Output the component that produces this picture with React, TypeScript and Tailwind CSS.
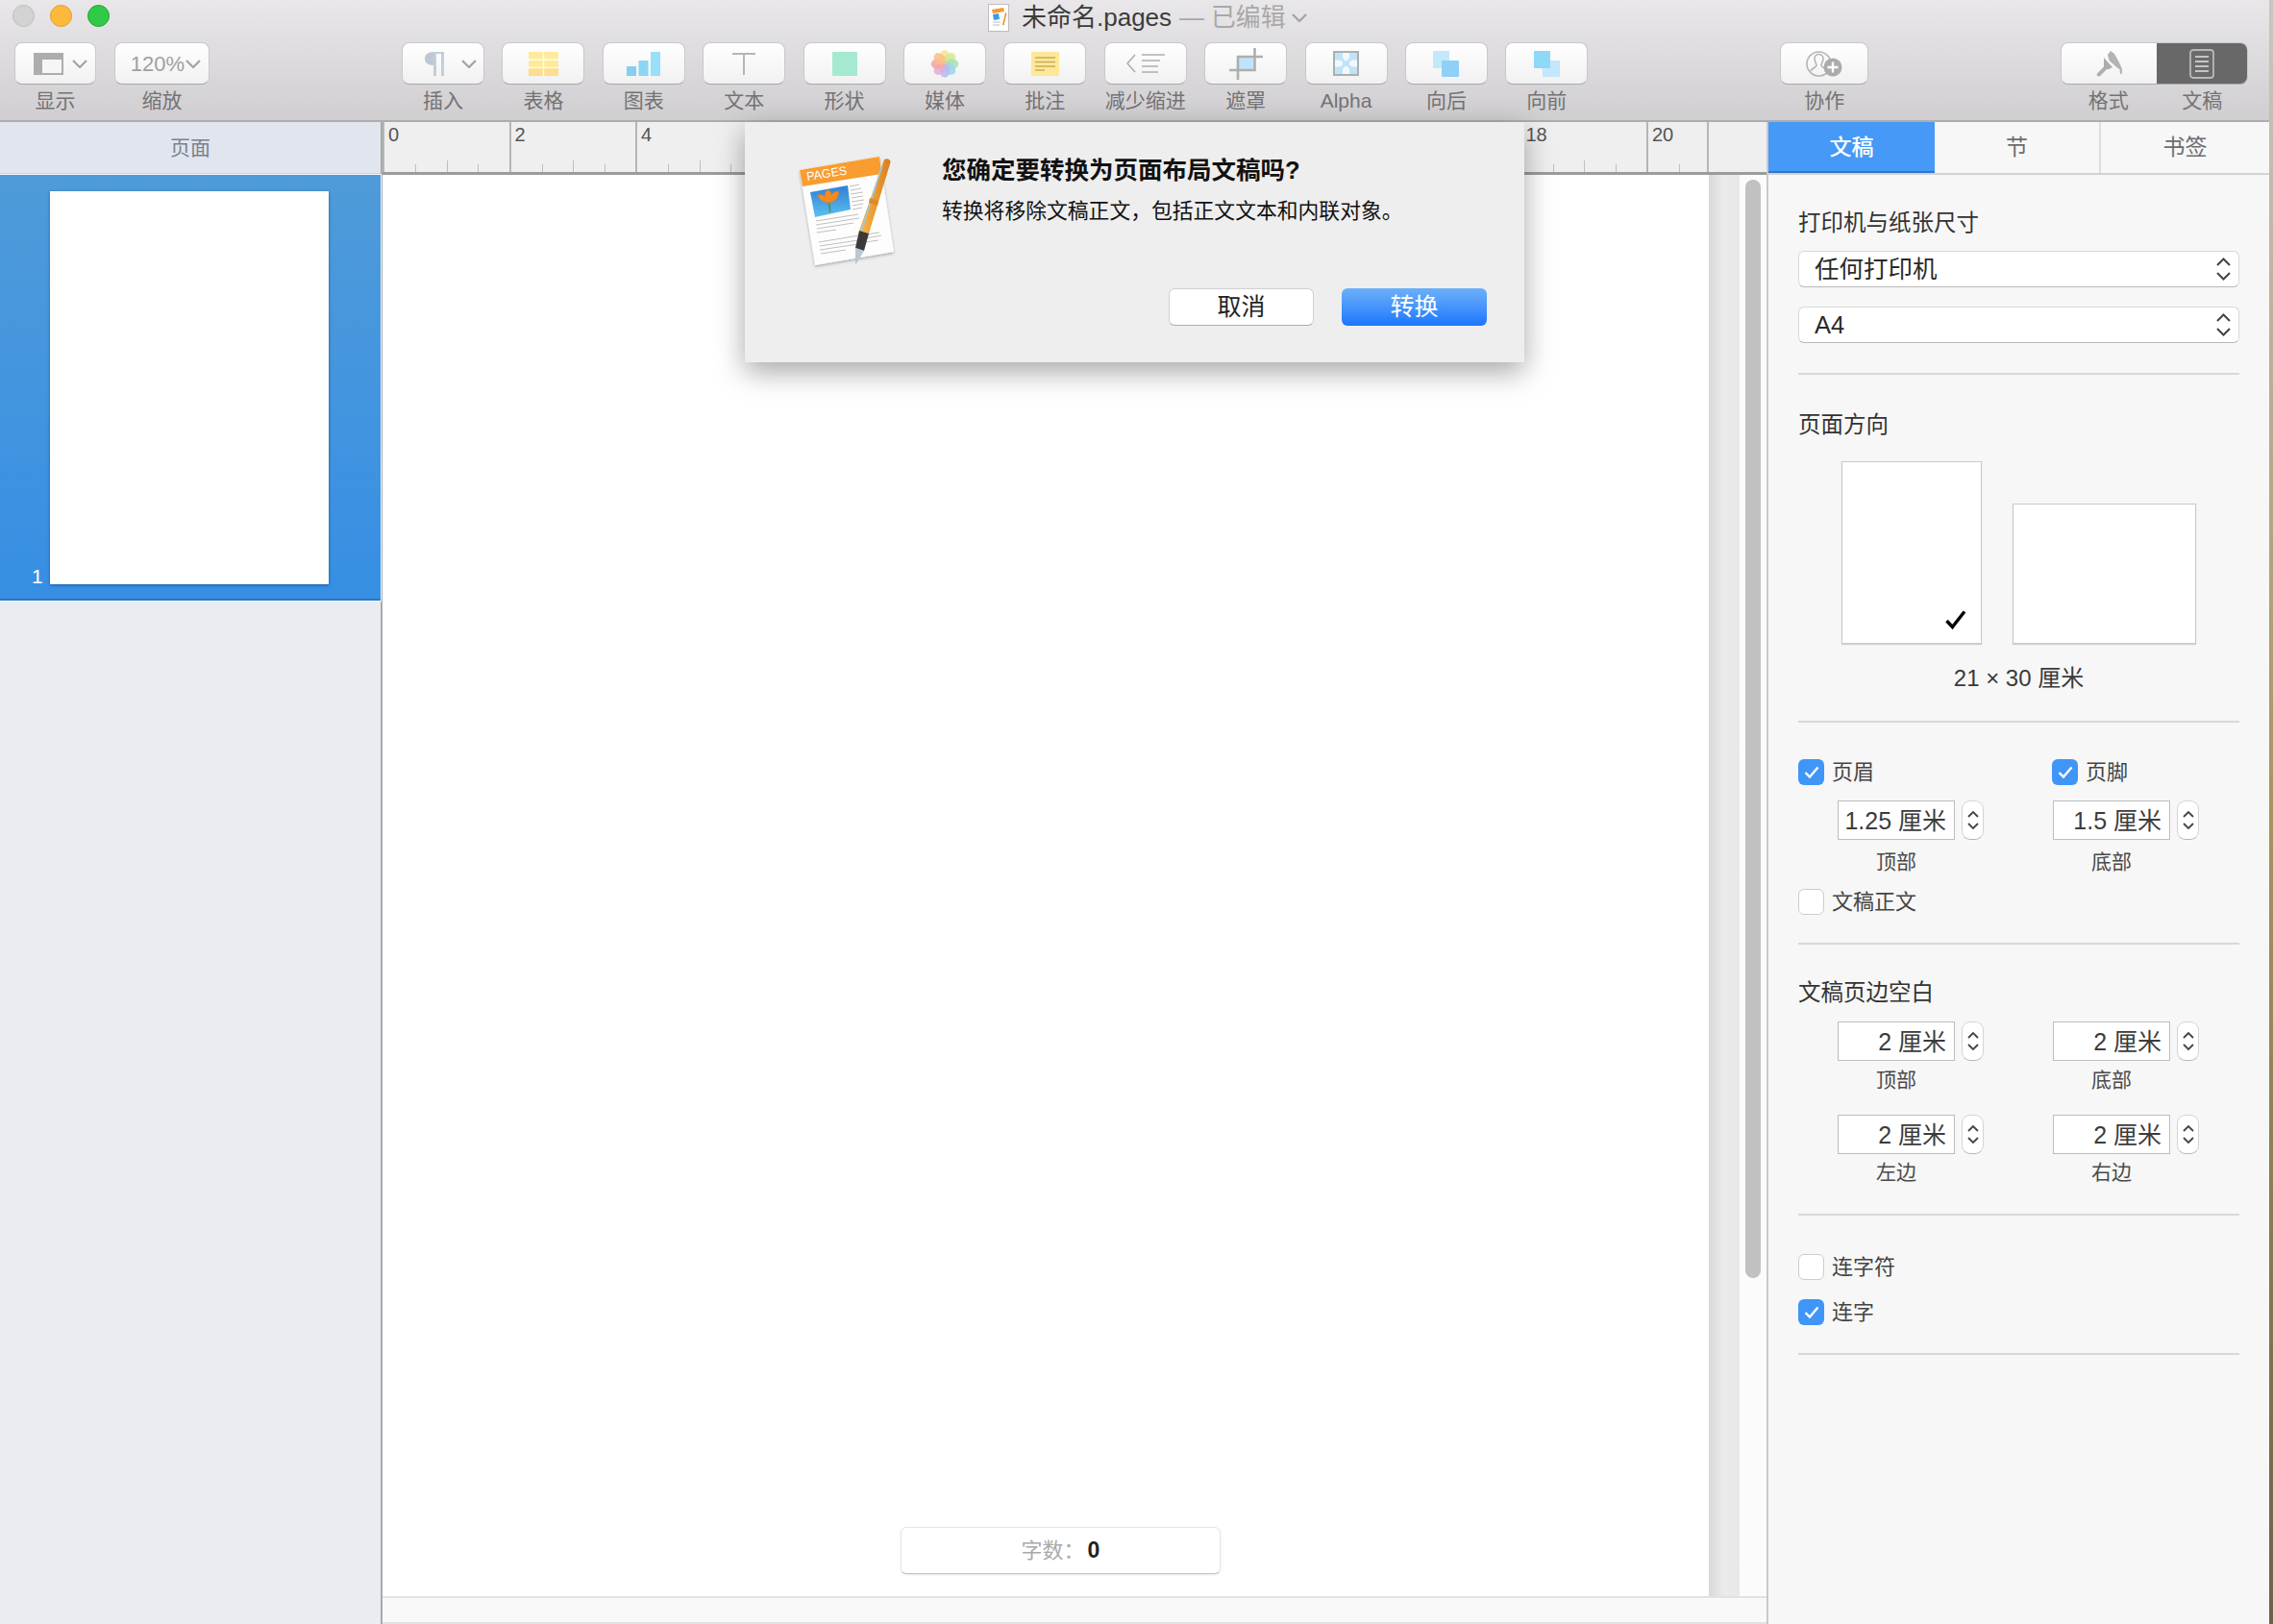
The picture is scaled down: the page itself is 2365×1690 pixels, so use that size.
import type { ReactNode } from "react"

const Chevron = ({ className = "" }: { className?: string }) => (
  <svg viewBox="0 0 16 9" className={`h-[9px] w-[16px] ${className}`} fill="none" stroke="#a3a3a3" strokeWidth="2.2">
    <path d="M1 1l7 7 7-7" />
  </svg>
)

const ViewIcon = () => (
  <svg viewBox="0 0 31 23" className="h-[23px] w-[31px]">
    <rect x="1" y="1" width="29" height="21" fill="#f6f6f6" stroke="#adadad" strokeWidth="2" />
    <rect x="1" y="1" width="29" height="6" fill="#adadad" />
    <rect x="1" y="7" width="8" height="15" fill="#adadad" />
  </svg>
)

const PilcrowIcon = () => (
  <svg viewBox="0 0 21 25" className="h-[25px] w-[21px]">
    <path d="M9 0C3 0 0 3 0 7s3 7 9 7z" fill="#bcc8d4" />
    <path d="M9 0h3v25H9zM17 0h3v25h-3z" fill="#c3ced9" />
    <path d="M9 0h11v2H9z" fill="#c3ced9" />
  </svg>
)

const TableIcon = () => (
  <svg viewBox="0 0 31 25" className="h-[25px] w-[31px]">
    <rect width="31" height="25" fill="#fdeb9c" />
    <rect y="16.500" width="31" height="8.500" fill="#fbdf8c" />
    <path d="M15.500 0v25M0 8.300h31M0 16.500h31" stroke="#fff" strokeWidth="1.400" opacity=".8" />
  </svg>
)

const ChartIcon = () => (
  <svg viewBox="0 0 35 25" className="h-[25px] w-[35px]">
    <rect y="15" width="10" height="10" fill="#85cdf3" />
    <rect x="12.500" y="9" width="10" height="16" fill="#8cd5f6" />
    <rect x="25" width="10" height="25" fill="#96e0fa" />
  </svg>
)

const TextIcon = () => (
  <svg viewBox="0 0 24 23" className="h-[23px] w-[24px]">
    <path d="M0 1h24M12 1v22" stroke="#b5b5b5" strokeWidth="2" fill="none" />
  </svg>
)

const ShapeIcon = () => <div className="h-[25px] w-[26px] rounded-[1px] bg-[#a5e9d0]" />

const PhotosIcon = () => {
  const petals = ["#fbe08d", "#d6e88f", "#a8dfb7", "#9fd2ec", "#b3bdeb", "#e2abd9", "#f4a5a5", "#f8c08a"]
  return (
    <svg viewBox="-15 -15 30 30" className="h-[29px] w-[30px]">
      {petals.map((c, i) => (
        <ellipse key={c} cx="0" cy="-7.500" rx="5.500" ry="7.300" fill={c} opacity=".85" transform={`rotate(${i * 45})`} />
      ))}
    </svg>
  )
}

const NoteIcon = () => (
  <svg viewBox="0 0 29 25" className="h-[25px] w-[29px]">
    <rect width="29" height="25" rx="1" fill="#fde89a" />
    <path d="M4 6h21M4 10.500h21M4 15h21M4 19h10" stroke="#c7ac57" strokeWidth="1.300" />
  </svg>
)

const IndentIcon = () => (
  <svg viewBox="0 0 40 20" className="h-[20px] w-[40px]" fill="none" stroke="#aeaeae" strokeWidth="1.600">
    <path d="M9 1L1 10l8 9" />
    <path d="M16 1h24M16 7h19M16 13h17M16 19h17" />
  </svg>
)

const MaskIcon = () => (
  <svg viewBox="0 0 35 33" className="h-[33px] w-[35px]">
    <rect x="10" y="10" width="15" height="13" fill="#bfe4fa" />
    <path d="M9 33V9h26M0 23h26.500V0" fill="none" stroke="#aeaeae" strokeWidth="2.600" />
  </svg>
)

const AlphaIcon = () => (
  <svg viewBox="0 0 27 26" className="h-[26px] w-[27px]">
    <rect x="1" y="1" width="25" height="24" fill="#bfe4fa" stroke="#aeaeae" strokeWidth="2" />
    <path d="M10 2h7v5l-2 3h-3l-2-3zM10 24h7v-5l-2-3h-3l-2 3zM2 9.500h5l3 2v3l-3 2H2zM25 9.500h-5l-3 2v3l3 2h5z" fill="#f1f8fc" />
  </svg>
)

const ArrangeIcon = ({ front }: { front: boolean }) => (
  <svg viewBox="0 0 27 27" className="h-[27px] w-[27px]">
    {front ? (
      <>
        <rect x="9" y="10" width="18" height="17" rx="1" fill="#c3e7fb" />
        <rect width="17" height="18" rx="1" fill="#8ed8f8" />
      </>
    ) : (
      <>
        <rect width="17" height="18" rx="1" fill="#c3e7fb" />
        <rect x="9" y="10" width="18" height="17" rx="1" fill="#8ed0f6" />
      </>
    )}
  </svg>
)

const CollabIcon = () => (
  <svg viewBox="0 0 38 27" className="h-[27px] w-[38px]">
    <circle cx="13.500" cy="13.500" r="12.500" fill="none" stroke="#b5b5b5" strokeWidth="1.600" />
    <path d="M9 8c0-6 9-6 9 0 0 3-2 5-2 7 0 2 5 3 6 5M9 8c0 3 2 5 2 7 0 2-5 3-6 6" fill="none" stroke="#b5b5b5" strokeWidth="1.600" />
    <circle cx="28" cy="17" r="9.500" fill="#ababab" />
    <path d="M28 11.500v11M22.500 17h11" stroke="#fff" strokeWidth="2.400" />
  </svg>
)

const BrushIcon = () => (
  <svg viewBox="0 0 29 27" className="h-[27px] w-[29px]">
    <path d="M16 0l4 3 5 9 3 7v4c0 1.500-2 1.500-2 0l-.5-4-2-1-9-8-1.500-6z" fill="#b3b3b3" />
    <path d="M9 7l9 10-4 2-2 0-7 7c-2 1.500-4-.5-3-2.500l7-7 0-5z" fill="#adadad" />
  </svg>
)

const DocIcon = () => (
  <svg viewBox="0 0 26 31" className="h-[31px] w-[26px]">
    <rect x="1" y="1" width="24" height="29" rx="3" fill="#6b6b6b" stroke="#b8b8b8" strokeWidth="1.800" />
    <path d="M6 8h14M6 13h14M6 18h14M6 23h14" stroke="#c4c4c4" strokeWidth="1.800" />
  </svg>
)

const TitleIcon = () => (
  <svg viewBox="0 0 22 29" className="h-[29px] w-[22px]">
    <rect x=".5" y=".5" width="21" height="28" fill="#fff" stroke="#bdbdbd" />
    <path d="M4 6l12-2 1 4-12 2z" fill="#f79a2e" />
    <path d="M5 11l6-1 1 6-6 1z" fill="#3d9be6" />
    <path d="M15 22l3-13 1.500.500-3 13z" fill="#e6942e" />
    <path d="M5 19h8M5 22h7" stroke="#bbb" />
  </svg>
)

const PagesIcon = () => (
  <svg viewBox="0 0 120 140" className="h-[140px] w-[120px]">
    <defs>
      <linearGradient id="photo" x1="0" y1="0" x2="0" y2="1">
        <stop offset="0" stopColor="#2f7fd6" />
        <stop offset="1" stopColor="#5cc0f0" />
      </linearGradient>
      <linearGradient id="pen" x1="0" y1="0" x2="1" y2="0">
        <stop offset="0" stopColor="#f9b84a" />
        <stop offset="1" stopColor="#d97f1e" />
      </linearGradient>
      <filter id="soft" x="-10%" y="-10%" width="120%" height="120%">
        <feDropShadow dx="0" dy="1.500" stdDeviation="1.500" floodColor="#000" floodOpacity=".3" />
      </filter>
    </defs>
    <polygon points="12,27 95,13 110,112 28,126" fill="#fdfdfd" filter="url(#soft)" />
    <polygon points="12,27 95,13 97.500,31 15,44" fill="#f99d30" />
    <text x="20" y="38" fontSize="12.500" fill="#fff" transform="rotate(-9 20 38)" fontFamily="Liberation Sans, sans-serif">PAGES</text>
    <polygon points="23,50 62,43 65,68 28,76" fill="url(#photo)" />
    <path d="M44 68l-1-8" stroke="#5c8a3a" strokeWidth="1.200" transform="translate(-9 -11) scale(1.200)" />
    <path d="M43 60c-9-1-10-6-9-7 3 0 5 1 6 2-1-3 0-5 2-6 2 1 3 2 3 4 2-2 4-3 6-3 1 3-1 9-8 10z" fill="#f58a1f" stroke="#e37a18" strokeWidth=".600" transform="translate(-9 -11) scale(1.200)" />
    <g stroke="#a5a5a5" strokeWidth=".7">
      <path d="M64 44l10-2M65 48l11-2M65 52l13-2M66 56l12-2M66 60l13-2M67 64l11-2M67 68l10-2M29 80l44-7M29 84l45-7M30 88l38-6M30 92l20-3" />
      <path d="M32 102l42-7M33 106l40-6M33 110l40-6M34 114l26-4M80 94l15-2M80 98l17-3M80 102l14-2" />
    </g>
    <path d="M100 16c3-2 7 0 6.500 3L84 93 74 90z" fill="url(#pen)" />
    <path d="M98 22l-22 69" stroke="#9dc8ea" strokeWidth="1.600" />
    <path d="M85 56l9 3-1 5-9-3z" fill="#e08a22" />
    <path d="M74 90l10 3-5 18-9-3z" fill="#3a3a3a" />
    <path d="M70 108l9 3-9 15z" fill="#b9c8d2" />
  </svg>
)

function ToolButton({ label, width, pad = "", children }: { label: string; width: string; pad?: string; children: ReactNode }) {
  return (
    <div className={`flex flex-col items-center ${width}`}>
      <div className={`flex h-[44px] w-full items-center justify-center gap-[9px] rounded-[8px] border border-[#c9c8ca] border-b-[#a9a8aa] bg-gradient-to-b from-[#ffffff] to-[#f1f1f1] ${pad}`}>
        {children}
      </div>
      <span className="mt-[3px] whitespace-nowrap text-[21px] leading-[28px] text-[#747374]">{label}</span>
    </div>
  )
}

function Toolbar() {
  return (
    <header className="h-[127px] shrink-0 border-b-2 border-[#aeadae] bg-gradient-to-b from-[#e9e7e9] to-[#d0ced1]">
      <div className="flex h-[44px] pl-[13px] pt-[5px]">
        <div className="flex gap-[16px]">
          <span className="h-[23px] w-[23px] rounded-full border border-[#bdbdbd] bg-[#d3d3d3]" />
          <span className="h-[23px] w-[23px] rounded-full border border-[#e09e2c] bg-[#fdb93c]" />
          <span className="h-[23px] w-[23px] rounded-full border border-[#1aa82e] bg-[#30c948]" />
        </div>
        <div className="ml-[914px] flex h-[26px] items-center">
          <TitleIcon />
          <span className="ml-[13px] text-[26px] leading-[30px] text-[#3b3b3b]">未命名.pages</span>
          <span className="ml-[8px] text-[25.800px] leading-[30px] text-[#a9a8a9]">— 已编辑</span>
          <Chevron className="ml-[7px]" />
        </div>
      </div>
      <div className="flex pl-[15px]">
        <ToolButton label="显示" width="w-[85px]" pad="pl-[11px]"><ViewIcon /><Chevron /></ToolButton>
        <div className="ml-[19px]">
          <ToolButton label="缩放" width="w-[99px]" pad="pl-[8px]">
            <span className="-mr-[8px] text-[22px] font-light text-[#a0a0a0]">120%</span>
            <Chevron />
          </ToolButton>
        </div>
        <div className="ml-[200px] flex gap-[18.400px]">
          <ToolButton label="插入" width="w-[86px]" pad="pl-[16px]"><PilcrowIcon /><Chevron className="ml-[8px]" /></ToolButton>
          <ToolButton label="表格" width="w-[86px]"><TableIcon /></ToolButton>
          <ToolButton label="图表" width="w-[86px]"><ChartIcon /></ToolButton>
          <ToolButton label="文本" width="w-[86px]"><TextIcon /></ToolButton>
          <ToolButton label="形状" width="w-[86px]"><ShapeIcon /></ToolButton>
          <ToolButton label="媒体" width="w-[86px]"><PhotosIcon /></ToolButton>
          <ToolButton label="批注" width="w-[86px]"><NoteIcon /></ToolButton>
          <ToolButton label="减少缩进" width="w-[86px]"><IndentIcon /></ToolButton>
          <ToolButton label="遮罩" width="w-[86px]"><MaskIcon /></ToolButton>
          <ToolButton label="Alpha" width="w-[86px]"><AlphaIcon /></ToolButton>
          <ToolButton label="向后" width="w-[86px]"><ArrangeIcon front={false} /></ToolButton>
          <ToolButton label="向前" width="w-[86px]"><ArrangeIcon front /></ToolButton>
        </div>
        <div className="ml-[200px]">
          <ToolButton label="协作" width="w-[92px]"><CollabIcon /></ToolButton>
        </div>
        <div className="ml-[200px] w-[195px]">
          <div className="flex h-[44px] overflow-hidden rounded-[8px] border border-[#c9c8ca] border-b-[#a9a8aa]">
            <div className="flex w-[99px] items-center justify-center bg-gradient-to-b from-[#ffffff] to-[#f1f1f1]"><BrushIcon /></div>
            <div className="flex flex-1 items-center justify-center bg-[#686868]"><DocIcon /></div>
          </div>
          <div className="mt-[3px] flex text-[21px] leading-[28px] text-[#747374]">
            <span className="w-[99px] text-center">格式</span>
            <span className="flex-1 text-center">文稿</span>
          </div>
        </div>
      </div>
    </header>
  )
}

function Sidebar() {
  return (
    <aside className="flex w-[398px] shrink-0 flex-col border-r-2 border-[#a9a9a9] bg-[#e9ecf1]">
      <div className="flex h-[55px] shrink-0 items-center justify-center border-b-2 border-[#cfd2d8] bg-[#e1e5ee] text-[21px] text-[#7a828c]">页面</div>
      <div className="flex h-[443px] shrink-0 border-b-2 border-[#2f78c0] bg-gradient-to-b from-[#4f9bd9] to-[#368fe4] pl-[33px] pt-[17px] outline-1 outline-[#f4f6f9]">
        <span className="mb-[13px] w-[19px] self-end text-[21px] leading-[21px] text-white">1</span>
        <div className="h-[409px] w-[290px] bg-white shadow-[0_1px_3px_rgba(0,40,100,0.5)]" />
      </div>
    </aside>
  )
}

function Ruler() {
  const marks = [0, 2, 4, 6, 8, 10, 12, 14, 16, 18, 20]
  return (
    <div className="flex h-[55px] shrink-0 border-b-[3px] border-[#9c9c9c] bg-[#efefef] text-[20px] font-light leading-[24px] text-[#555555]">
      <div className="flex w-[1380px] overflow-hidden border-r-2 border-[#b5b5b5]">
        {marks.map((m) => (
          <div key={m} className="flex h-full w-[131.500px] shrink-0 flex-col justify-between border-l-2 border-[#b5b5b5]">
            <span className="pl-[4px] pt-[1px]">{m}</span>
            <div className="grid h-[12px] grid-cols-4 items-end">
              <div />
              <div className="h-[8px] border-l border-[#bdbdbd]" />
              <div className="h-[12px] border-l border-[#bdbdbd]" />
              <div className="h-[8px] border-l border-[#bdbdbd]" />
            </div>
          </div>
        ))}
      </div>
      <div className="flex-1" />
    </div>
  )
}

function Canvas() {
  return (
    <main className="flex min-w-0 flex-1 flex-col">
      <Ruler />
      <div className="flex min-h-0 flex-1">
        <div className="relative w-[1380px] bg-white">
          <div className="absolute bottom-[23px] left-[539px] flex h-[49px] w-[333px] items-center justify-center rounded-[6px] border border-[#e6e6e6] border-b-[#c4c4c4] bg-white text-[22px] text-[#aaaaaa] shadow-[0_1px_2px_rgba(0,0,0,0.1)]">
            字数：<span className="ml-[3px] text-[23px] font-bold text-[#222222]">0</span>
          </div>
        </div>
        <div className="w-[32px] bg-gradient-to-r from-[#d9d9d9] via-[#ebebeb] to-[#e8e8e8]" />
        <div className="w-[28px] bg-[#fbfbfb] pl-[6px] pt-[5px]">
          <div className="h-[1143px] w-[16px] rounded-full bg-[#c1c1c1]" />
        </div>
      </div>
      <div className="h-[29px] shrink-0 border-y-2 border-y-[#e2e2e2] bg-[#f9f9f9]" />
    </main>
  )
}

const Stepper = () => (
  <div className="flex h-full w-[23px] flex-col items-center justify-center gap-[5px] rounded-[9px] border border-[#d4d4d4] border-b-[#b5b5b5] bg-white">
    <svg viewBox="0 0 12 7" className="h-[7px] w-[12px]" fill="none" stroke="#444" strokeWidth="1.800"><path d="M1 6l5-5 5 5" /></svg>
    <svg viewBox="0 0 12 7" className="h-[7px] w-[12px]" fill="none" stroke="#444" strokeWidth="1.800"><path d="M1 1l5 5 5-5" /></svg>
  </div>
)

function Field({ value, label, labelGap, right = false }: { value: string; label: string; labelGap: string; right?: boolean }) {
  return (
    <div className={right ? "pl-[1px]" : "pl-[41px]"}>
      <div className="flex h-[41px] gap-[7px]">
        <div className="flex h-full w-[122px] items-center justify-end border border-[#bdbdbd] bg-white pr-[8px] pt-[3px] text-[25px] text-[#3c3c3c]">{value}</div>
        <Stepper />
      </div>
      <div className={`w-[122px] text-center text-[21px] leading-[28px] text-[#4a4a4a] ${labelGap}`}>{label}</div>
    </div>
  )
}

function Check({ checked, label }: { checked: boolean; label: string }) {
  return (
    <div className="flex h-[27px] items-center gap-[8px] text-[22px] leading-[27px] text-[#444444]">
      {checked ? (
        <span className="flex h-[27px] w-[27px] items-center justify-center rounded-[6px] bg-[#3f96f8]">
          <svg viewBox="0 0 16 13" className="h-[13px] w-[16px]" fill="none" stroke="#fff" strokeWidth="2.400"><path d="M1.500 7l4.500 4.500L14.500 1.500" /></svg>
        </span>
      ) : (
        <span className="h-[27px] w-[27px] rounded-[6px] border border-[#cccccc] bg-white" />
      )}
      {label}
    </div>
  )
}

const Divider = ({ className }: { className: string }) => <div className={`h-[2px] bg-[#d8d8d8] ${className}`} />

const Heading = ({ children, className }: { children: string; className: string }) => (
  <div className={`text-[23.500px] leading-[30px] text-[#333333] ${className}`}>{children}</div>
)

function Select({ value, className }: { value: string; className: string }) {
  return (
    <div className={`flex h-[38px] items-center justify-between rounded-[6px] border border-[#d8d8d8] border-b-[#b9b9b9] bg-white pl-[16px] pr-[7px] text-[25.500px] text-[#2a2a2a] ${className}`}>
      {value}
      <svg viewBox="0 0 16 24" className="h-[24px] w-[17px]" fill="none" stroke="#444" strokeWidth="2">
        <path d="M1.500 8L8 1.500 14.500 8M1.500 16L8 22.500 14.500 16" />
      </svg>
    </div>
  )
}

function Inspector() {
  return (
    <section className="flex w-[523px] shrink-0 flex-col border-l-2 border-[#c9c9c9] bg-[#f7f7f7]">
      <div className="flex h-[55px] shrink-0 border-b-2 border-[#d2d2d2] text-[23px]">
        <div className="flex w-[173px] items-center justify-center bg-[#4699f6] font-medium text-white shadow-[inset_0_-2px_0_#2f78c8]">文稿</div>
        <div className="flex w-[173px] items-center justify-center border-r-2 border-[#dddddd] text-[#6d6d6d]">节</div>
        <div className="flex flex-1 items-center justify-center text-[#6d6d6d]">书签</div>
      </div>
      <div className="w-[492px] pl-[31px] pr-[2px]">
        <Heading className="mt-[35px]">打印机与纸张尺寸</Heading>
        <Select value="任何打印机" className="mt-[14px]" />
        <Select value="A4" className="mt-[20px]" />
        <Divider className="mt-[31px]" />
        <Heading className="mt-[37px]">页面方向</Heading>
        <div className="mt-[23px] flex items-end gap-[32px] pl-[45px]">
          <div className="relative h-[190px] w-[146px] border border-[#c9c9c9] bg-white shadow-[0_1px_1px_rgba(0,0,0,0.15)]">
            <svg viewBox="0 0 22 20" className="absolute bottom-[14px] right-[15px] h-[20px] w-[22px]" fill="none" stroke="#000" strokeWidth="3.400"><path d="M1.500 11l6 6.500L20 1.500" /></svg>
          </div>
          <div className="h-[146px] w-[191px] border border-[#c9c9c9] bg-white shadow-[0_1px_1px_rgba(0,0,0,0.15)]" />
        </div>
        <div className="mt-[21px] text-center text-[24px] leading-[30px] text-[#3a3a3a]">21 × 30 厘米</div>
        <Divider className="mt-[29px]" />

        <div className="mt-[38px] grid grid-cols-[264px_1fr]">
          <Check checked label="页眉" />
          <Check checked label="页脚" />
        </div>
        <div className="mt-[16px] grid grid-cols-[264px_1fr]">
          <Field value="1.25 厘米" label="顶部" labelGap="mt-[9px]" />
          <Field value="1.5 厘米" label="底部" labelGap="mt-[9px]" right />
        </div>
        <div className="mt-[14px]"><Check checked={false} label="文稿正文" /></div>
        <Divider className="mt-[29px]" />

        <Heading className="mt-[35px]">文稿页边空白</Heading>
        <div className="mt-[15px] grid grid-cols-[264px_1fr]">
          <Field value="2 厘米" label="顶部" labelGap="mt-[6px]" />
          <Field value="2 厘米" label="底部" labelGap="mt-[6px]" right />
        </div>
        <div className="mt-[22px] grid grid-cols-[264px_1fr]">
          <Field value="2 厘米" label="左边" labelGap="mt-[5px]" />
          <Field value="2 厘米" label="右边" labelGap="mt-[5px]" right />
        </div>
        <Divider className="mt-[29px]" />

        <div className="mt-[40px]"><Check checked={false} label="连字符" /></div>
        <div className="mt-[20px]"><Check checked label="连字" /></div>
        <Divider className="mt-[29px]" />
      </div>
    </section>
  )
}

function Dialog() {
  return (
    <div className="absolute left-[775px] top-[127px] h-[250px] w-[811px] bg-[#eeeeee] shadow-[0_10px_28px_rgba(0,0,0,0.35)]">
      <div className="flex h-[173px]">
        <div className="ml-[45px] mt-[23px]"><PagesIcon /></div>
        <div className="ml-[40px] pt-[33px]">
          <h2 className="text-[25.500px] font-bold leading-[34px] text-[#111111]">您确定要转换为页面布局文稿吗?</h2>
          <p className="mt-[11px] text-[21.800px] leading-[30px] text-[#111111]">转换将移除文稿正文，包括正文文本和内联对象。</p>
        </div>
      </div>
      <div className="flex justify-end gap-[29px] pr-[39px]">
        <button className="h-[39px] w-[151px] rounded-[6px] border border-[#d0d0d0] border-b-[#aeaeae] bg-white text-[25px] text-[#222222]">取消</button>
        <button className="h-[39px] w-[151px] rounded-[6px] bg-gradient-to-b from-[#6cb0f8] to-[#1a75fe] text-[25px] text-white">转换</button>
      </div>
    </div>
  )
}

export default function App() {
  return (
    <div className="flex h-[1690px] w-[2365px] overflow-hidden font-['Liberation_Sans','Noto_Sans_CJK_SC',sans-serif]">
      <div className="relative flex w-[2361px] flex-col">
        <Toolbar />
        <div className="flex min-h-0 flex-1">
          <Sidebar />
          <Canvas />
          <Inspector />
        </div>
        <Dialog />
      </div>
      <div className="w-[4px] bg-gradient-to-b from-[#c9c6c2] via-[#a8925f] to-[#6d6248]" />
    </div>
  )
}
